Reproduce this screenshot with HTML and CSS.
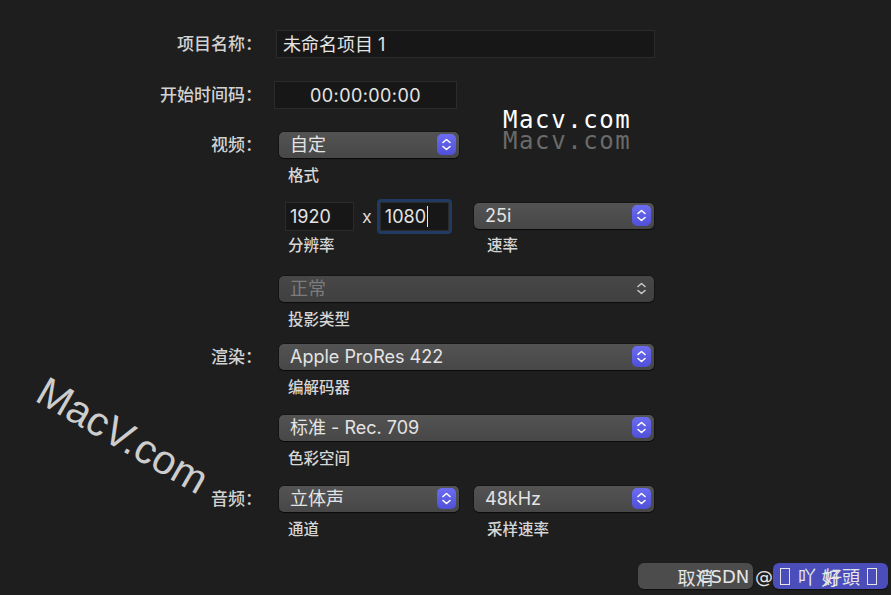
FILE: index.html
```html
<!DOCTYPE html>
<html lang="zh-CN">
<head>
  <meta charset="UTF-8" />
  <title>项目设置</title>
  <link rel="stylesheet" href="styles.css">
</head>
<body>
  <div class="sheet">
    <div class="row r-name">
      <div class="label tall">项目名称：</div>
      <div class="field name">未命名项目 1</div>
    </div>

    <div class="row r-tc">
      <div class="label tall">开始时间码：</div>
      <div class="field tc">00:00:00:00</div>
    </div>

    <div class="row r-video">
      <div class="label">视频：</div>
      <div class="body">
        <div class="popup half">自定<span class="stepper"><svg width="19" height="21" viewBox="0 0 19 21"><path d="M6 8.5 L9.5 5.5 L13 8.5 M6 12.5 L9.5 15.5 L13 12.5" fill="none" stroke="#fff" stroke-width="1.6" stroke-linecap="round" stroke-linejoin="round"/></svg></span></div>
        <div class="sub">格式</div>
      </div>
    </div>

    <div class="row r-res">
      <div class="label"></div>
      <div class="body pair">
        <div class="dims">
          <div class="field num">1920</div>
          <span class="times">x</span>
          <div class="focus"><div class="field num">1080<span class="caret"></span></div></div>
        </div>
        <div class="popup">25i<span class="stepper"><svg width="19" height="21" viewBox="0 0 19 21"><path d="M6 8.5 L9.5 5.5 L13 8.5 M6 12.5 L9.5 15.5 L13 12.5" fill="none" stroke="#fff" stroke-width="1.6" stroke-linecap="round" stroke-linejoin="round"/></svg></span></div>
        <div class="sub">分辨率</div>
        <div class="sub right">速率</div>
      </div>
    </div>

    <div class="row r-proj">
      <div class="label"></div>
      <div class="body">
        <div class="popup full disabled">正常<span class="stepper plain"><svg width="19" height="21" viewBox="0 0 19 21"><path d="M6 8.5 L9.5 5.5 L13 8.5 M6 12.5 L9.5 15.5 L13 12.5" fill="none" stroke="#c8c8c8" stroke-width="1.6" stroke-linecap="round" stroke-linejoin="round"/></svg></span></div>
        <div class="sub">投影类型</div>
      </div>
    </div>

    <div class="row r-codec">
      <div class="label">渲染：</div>
      <div class="body">
        <div class="popup full">Apple ProRes 422<span class="stepper"><svg width="19" height="21" viewBox="0 0 19 21"><path d="M6 8.5 L9.5 5.5 L13 8.5 M6 12.5 L9.5 15.5 L13 12.5" fill="none" stroke="#fff" stroke-width="1.6" stroke-linecap="round" stroke-linejoin="round"/></svg></span></div>
        <div class="sub">编解码器</div>
      </div>
    </div>

    <div class="row r-color">
      <div class="label"></div>
      <div class="body">
        <div class="popup full">标准 - Rec. 709<span class="stepper"><svg width="19" height="21" viewBox="0 0 19 21"><path d="M6 8.5 L9.5 5.5 L13 8.5 M6 12.5 L9.5 15.5 L13 12.5" fill="none" stroke="#fff" stroke-width="1.6" stroke-linecap="round" stroke-linejoin="round"/></svg></span></div>
        <div class="sub">色彩空间</div>
      </div>
    </div>

    <div class="row r-audio">
      <div class="label">音频：</div>
      <div class="body pair">
        <div class="popup">立体声<span class="stepper"><svg width="19" height="21" viewBox="0 0 19 21"><path d="M6 8.5 L9.5 5.5 L13 8.5 M6 12.5 L9.5 15.5 L13 12.5" fill="none" stroke="#fff" stroke-width="1.6" stroke-linecap="round" stroke-linejoin="round"/></svg></span></div>
        <div class="popup">48kHz<span class="stepper"><svg width="19" height="21" viewBox="0 0 19 21"><path d="M6 8.5 L9.5 5.5 L13 8.5 M6 12.5 L9.5 15.5 L13 12.5" fill="none" stroke="#fff" stroke-width="1.6" stroke-linecap="round" stroke-linejoin="round"/></svg></span></div>
        <div class="sub">通道</div>
        <div class="sub right">采样速率</div>
      </div>
    </div>

    <div class="actions">
      <button class="btn cancel">取消</button>
      <button class="btn ok">好</button>
    </div>
  </div>

  <!-- watermarks on top of the dialog -->
  <div class="mark-top">Macv.com</div>
  <div class="mark-top ghost">Macv.com</div>
  <div class="mark-tilt">MacV.com</div>
  <div class="mark-csdn">CSDN @<span class="tofu"></span><span class="gap">吖</span><span class="gap">好頭</span><span class="tofu"></span></div>
</body>
</html>
```

FILE: styles.css
```css
body {
  margin: 0;
  width: 891px;
  height: 595px;
  overflow: hidden;
  position: relative;
  background: #1e1e1e;
  color: #dedede;
  font-family: Inter, "Noto Sans CJK SC", sans-serif;
}

.sheet {
  padding-top: 30px;
}

.row {
  display: flex;
  align-items: flex-start;
}

.label {
  flex: none;
  box-sizing: border-box;
  width: 270px;
  padding-right: 2px;
  margin-left: -6px;
  text-align: right;
  font-size: 17px;
  font-weight: 500;
  line-height: 26px;
  color: #d2d2d2;
}

.label.tall {
  line-height: 28px;
}

.body {
  margin-left: 15px;
}

.field {
  box-sizing: border-box;
  height: 28px;
  line-height: 27px;
  background: #171717;
  border: 1px solid #2b2b2b;
  font-size: 18px;
  color: #e4e4e4;
}

.field.name {
  width: 379px;
  margin-left: 12px;
  padding-left: 6px;
}

.r-tc {
  margin-top: 23px;
}

.field.tc {
  width: 183px;
  margin-left: 10px;
  text-align: center;
  letter-spacing: 0.4px;
}

.r-video {
  margin-top: 23px;
}

.popup {
  position: relative;
  box-sizing: border-box;
  width: 180px;
  height: 26px;
  line-height: 26px;
  padding-left: 11px;
  border-radius: 5px;
  background: linear-gradient(#535353, #474747);
  box-shadow: 0 1px 1px rgba(0, 0, 0, 0.55), 0 0 0 0.5px rgba(0, 0, 0, 0.5);
  font-size: 18px;
  color: #e4e4e4;
}

.popup.full {
  width: 375px;
}

.popup.disabled {
  background: linear-gradient(#474747, #404040);
  color: #7c7c7c;
}

.stepper {
  position: absolute;
  right: 3px;
  top: 2px;
  width: 19px;
  height: 21px;
  border-radius: 5px;
  background: linear-gradient(#6d6df2, #4f4fd8);
}

.stepper svg {
  display: block;
}

.stepper.plain {
  background: none;
}

.sub {
  margin-top: 8px;
  padding-left: 9px;
  font-size: 15.5px;
  font-weight: 500;
  line-height: 20px;
  color: #d6d6d6;
}

.sub.right {
  padding-left: 13px;
}

.pair {
  display: grid;
  grid-template-columns: 180px 180px;
  column-gap: 15px;
  align-items: center;
}

.r-res {
  margin-top: 12px;
}

.r-res .sub {
  margin-top: 2px;
}

.dims {
  display: flex;
  align-items: center;
  height: 36px;
}

.field.num {
  width: 69px;
  height: 29px;
  line-height: 28px;
  padding-left: 4px;
}

.dims > .field.num {
  margin-left: 6px;
}

.times {
  margin: 0 5px 0 8px;
  font-size: 18px;
  color: #d8d8d8;
}

.focus {
  padding: 3px;
  border-radius: 4px;
  background: #1f3a63;
}

.caret {
  display: inline-block;
  width: 1px;
  height: 21px;
  margin-left: 1px;
  vertical-align: -4px;
  background: #e8e8e8;
}

.r-proj {
  margin-top: 20px;
}

.r-codec {
  margin-top: 14px;
}

.r-color {
  margin-top: 17px;
}

.r-audio {
  margin-top: 17px;
}

.actions {
  display: flex;
  justify-content: flex-end;
  gap: 20px;
  margin-top: 23px;
  padding-right: 3px;
}

.btn {
  width: 115px;
  height: 26px;
  border: none;
  border-radius: 6px;
  font-family: inherit;
  font-size: 18px;
  color: #e4e4e4;
  box-shadow: 0 1px 1px rgba(0, 0, 0, 0.5);
}

.btn.cancel {
  background: #4c4c4c;
}

.btn.ok {
  background: #4b4dba;
}

.mark-top {
  position: absolute;
  left: 503px;
  top: 106px;
  font-family: "DejaVu Sans Mono", monospace;
  font-size: 24px;
  letter-spacing: 1.6px;
  color: #ffffff;
}

.mark-top.ghost {
  top: 127px;
  color: #6a6a6a;
}

.mark-tilt {
  position: absolute;
  left: 52px;
  top: 368px;
  font-family: "Liberation Sans", sans-serif;
  font-size: 41px;
  color: #cdcdcd;
  transform: rotate(30deg);
  transform-origin: left top;
}

.mark-csdn {
  position: absolute;
  left: 698px;
  top: 564px;
  display: flex;
  align-items: center;
  height: 24px;
  font-family: "DejaVu Sans", sans-serif;
  font-size: 18px;
  color: #e6e6e6;
  white-space: nowrap;
}

.gap {
  margin-left: 8px;
}

.tofu {
  display: inline-block;
  width: 8px;
  height: 15px;
  margin-left: 7px;
  border: 1px solid #e6e6e6;
}
```
